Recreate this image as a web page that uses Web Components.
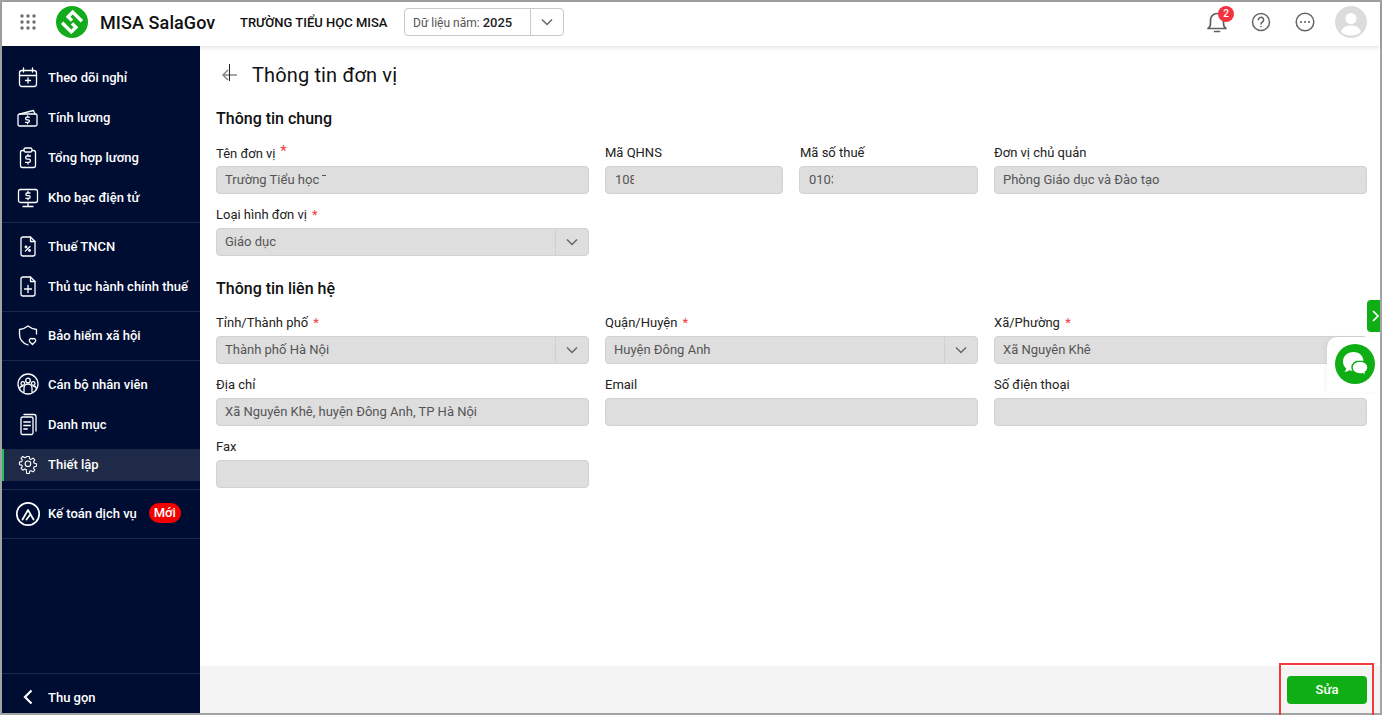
<!DOCTYPE html>
<html lang="vi">
<head>
<meta charset="utf-8">
<title>MISA SalaGov</title>
<style>
  html, body { margin: 0; height: 100%; }
  body { font-family: Roboto, "Liberation Sans", sans-serif; overflow: hidden; }
</style>
</head>
<body>
<app-shell>
  <app-header slot="header"></app-header>
  <side-nav slot="nav">
    <nav-group first>
      <nav-item icon="calendar">Theo dõi nghỉ</nav-item>
      <nav-item icon="wallet">Tính lương</nav-item>
      <nav-item icon="clipboard">Tổng hợp lương</nav-item>
      <nav-item icon="monitor">Kho bạc điện tử</nav-item>
    </nav-group>
    <nav-group>
      <nav-item icon="percent">Thuế TNCN</nav-item>
      <nav-item icon="fileplus">Thủ tục hành chính thuế</nav-item>
    </nav-group>
    <nav-group>
      <nav-item icon="shield">Bảo hiểm xã hội</nav-item>
    </nav-group>
    <nav-group>
      <nav-item icon="people">Cán bộ nhân viên</nav-item>
      <nav-item icon="docs">Danh mục</nav-item>
      <nav-item icon="gear" active>Thiết lập</nav-item>
    </nav-group>
    <nav-group>
      <nav-item icon="account" badge="Mới">Kế toán dịch vụ</nav-item>
    </nav-group>
  </side-nav>
  <unit-page slot="main">
    <form-section title="Thông tin chung">
      <form-field label="Tên đơn vị" required raised span="2" value="Trường Tiểu học" tick></form-field>
      <form-field label="Mã QHNS" value="108" clip="19" inset></form-field>
      <form-field label="Mã số thuế" value="0103" clip="24" inset labelinset></form-field>
      <form-field label="Đơn vị chủ quản" span="2" value="Phòng Giáo dục và Đào tạo"></form-field>
      <form-field label="Loại hình đơn vị" required span="2" value="Giáo dục" select></form-field>
    </form-section>
    <form-section title="Thông tin liên hệ">
      <form-field label="Tỉnh/Thành phố" required span="2" value="Thành phố Hà Nội" select></form-field>
      <form-field label="Quận/Huyện" required span="2" value="Huyện Đông Anh" select></form-field>
      <form-field label="Xã/Phường" required span="2" value="Xã Nguyên Khê"></form-field>
      <form-field label="Địa chỉ" span="2" value="Xã Nguyên Khê, huyện Đông Anh, TP Hà Nội"></form-field>
      <form-field label="Email" span="2"></form-field>
      <form-field label="Số điện thoại" span="2"></form-field>
      <form-field label="Fax" span="2"></form-field>
    </form-section>
  </unit-page>
  <chat-dock slot="overlay"></chat-dock>
</app-shell>

<script>
const ICONS = {
  calendar: '<rect x="2.5" y="4.5" width="17" height="16" rx="2.5"/><path d="M2.5 9.5h17M6.5 2v4M15.5 2v4M11 12v5M8.5 14.5h5"/>',
  wallet: '<path d="M3 8l13.5-3.5 1.5 3.5"/><rect x="1" y="8" width="19" height="12" rx="1.5"/><path d="M12.4 11.2h-2.5a1.2 1.2 0 0 0 0 2.6h1.2a1.2 1.2 0 0 1 0 2.6H8.600M10.500 10v1.200M10.500 16.400v1.300"/>',
  clipboard: '<path d="M7 4.500H5.500a2 2 0 0 0-2 2v13a2 2 0 0 0 2 2h11a2 2 0 0 0 2-2v-13a2 2 0 0 0-2-2H15"/><rect x="7" y="2" width="8" height="4" rx="1.500"/><path d="M13.500 10h-3.300a1.600 1.600 0 0 0 0 3.200h1.600a1.600 1.600 0 0 1 0 3.200H8.500M11 8.500v1.500M11 16.400v1.600"/>',
  monitor: '<rect x="1.500" y="3.500" width="19" height="13" rx="2"/><path d="M11 16.500v3.500M6 20.500h10"/><path d="M13 7h-2.800a1.300 1.300 0 0 0 0 2.700h1.600a1.300 1.300 0 0 1 0 2.700H9M11 5.500V7M11 12.400v1.300"/>',
  percent: '<path d="M13.500 2H6a2 2 0 0 0-2 2v15a2 2 0 0 0 2 2h10a2 2 0 0 0 2-2V6.500z"/><path d="M13.500 2v4.500H18"/><path d="M8.500 16l4.500-4.500"/><circle cx="9" cy="12" r=".8"/><circle cx="12.500" cy="15.500" r=".8"/>',
  fileplus: '<path d="M13.500 2H6a2 2 0 0 0-2 2v15a2 2 0 0 0 2 2h10a2 2 0 0 0 2-2V6.500z"/><path d="M13.500 2v4.500H18M11 10.500v7M7.500 14h7"/>',
  shield: '<path d="M11 21C5 19 2.500 15 2.500 10V5.500C6 5 8.500 4 11 2c2.500 2 5 3 8.500 3.500V10"/><path d="M15.500 20.500l-3-3a2 2 0 0 1 3-2.500 2 2 0 0 1 3 2.500z"/>',
  people: '<circle cx="11" cy="11" r="10"/><circle cx="11" cy="7.500" r="2.300"/><circle cx="5.800" cy="10.500" r="1.800"/><circle cx="16.200" cy="10.500" r="1.800"/><path d="M7 19v-4a4 4 0 0 1 8 0v4M2.800 16v-1a3 3 0 0 1 3-2M19.200 16v-1a3 3 0 0 0-3-2"/>',
  docs: '<rect x="4" y="4" width="12" height="17.500" rx="1.500"/><path d="M7 1.500h10a2 2 0 0 1 2 2V18M6.800 9h6.500M6.800 12.500h6.500M6.800 16h3.500"/>',
  gear: '<g transform="translate(1.600 1.400) scale(.85)"><circle cx="11" cy="11" r="3.300"/><path d="M9.500 2h3l.5 2.600 1.800.8 2.200-1.500 2.100 2.100-1.500 2.200.8 1.800 2.600.5v3l-2.600.5-.8 1.800 1.500 2.200-2.100 2.100-2.200-1.500-1.800.8-.5 2.600h-3L9 17.400l-1.800-.8L5 18.100 2.900 16l1.500-2.200-.8-1.800L1 11.500v-3l2.600-.5.8-1.800L2.900 4 5 1.900l2.200 1.500L9 2.600z" transform="translate(0 .5)"/></g>',
  account: '<circle cx="11" cy="12" r="11.200" stroke-width="1.700"/><path d="M5.500 17.500L11 8l5.500 9.500M9.500 17.500l3-4" stroke-width="1.700"/>'
};

class AppShell extends HTMLElement {
  constructor() {
    super();
    this.attachShadow({ mode: "open" });
    this.shadowRoot.innerHTML = `
      <style>
        :host {
          display: block;
          position: relative;
          box-sizing: border-box;
          width: 1382px;
          height: 715px;
          border: 2px solid #a3a3a3;
          background: #fff;
        }
        .wrap { display: flex; flex-direction: column; height: 100%; }
        .body { flex: 1; display: flex; min-height: 0; }
      </style>
      <div class="wrap">
        <slot name="header"></slot>
        <div class="body">
          <slot name="nav"></slot>
          <slot name="main"></slot>
        </div>
      </div>
      <slot name="overlay"></slot>
    `;
  }
}

class AppHeader extends HTMLElement {
  constructor() {
    super();
    this.attachShadow({ mode: "open" });
    this.shadowRoot.innerHTML = `
      <style>
        :host {
          display: flex;
          align-items: center;
          flex: none;
          box-sizing: border-box;
          height: 44px;
          padding: 0 13px 4px 18px;
          position: relative;
          z-index: 2;
          background: #fff;
          box-shadow: 0 1px 5px rgba(0, 0, 0, .14);
          color: #111;
        }
        svg { display: block; flex: none; }
        .apps { margin-right: 20px; }
        .logo { margin-right: 12px; }
        .brand { font-size: 18px; font-weight: 500; letter-spacing: .09px; width: 140px; }
        .school { font-size: 13px; font-weight: 500; width: 164px; white-space: nowrap; }
        .year {
          box-sizing: border-box;
          display: flex;
          align-items: center;
          width: 160px;
          height: 28px;
          border: 1px solid #c9c9c9;
          border-radius: 4px;
          font-size: 12px;
        }
        .year .val { flex: 1; padding-left: 8px; color: #555; white-space: nowrap; }
        .year b { font-size: 13px; font-weight: 500; color: #222; }
        .year .arrow { width: 32px; height: 100%; border-left: 1px solid #c9c9c9; display: flex; align-items: center; justify-content: center; }
        .tools { margin-left: auto; display: flex; align-items: center; }
        .bell { position: relative; width: 24px; height: 24px; margin-right: 22px; }
        .badge {
          position: absolute;
          left: 13px;
          top: -4px;
          width: 16px;
          height: 16px;
          border-radius: 50%;
          background: #f5333f;
          color: #fff;
          font-size: 10px;
          font-weight: 500;
          line-height: 16px;
          text-align: center;
        }
        .help { margin-right: 24px; }
        .more { margin-right: 20px; }
      </style>
      <svg class="apps" width="16" height="16" viewBox="0 0 16 16" fill="#6f6f6f">
        <circle cx="2" cy="2" r="1.700"/><circle cx="8" cy="2" r="1.700"/><circle cx="14" cy="2" r="1.700"/>
        <circle cx="2" cy="8" r="1.700"/><circle cx="8" cy="8" r="1.700"/><circle cx="14" cy="8" r="1.700"/>
        <circle cx="2" cy="14" r="1.700"/><circle cx="8" cy="14" r="1.700"/><circle cx="14" cy="14" r="1.700"/>
      </svg>
      <svg class="logo" width="32" height="32" viewBox="0 0 32 32">
        <circle cx="16" cy="16" r="16" fill="#13ab1b"/>
        <g transform="rotate(45 16 16)" fill="none" stroke="#fff" stroke-width="3.400">
          <path d="M22.500 8.500H9.500V15H15"/>
          <path d="M9.500 23.500H22.500V17H17"/>
        </g>
      </svg>
      <span class="brand">MISA SalaGov</span>
      <span class="school">TRƯỜNG TIỂU HỌC MISA</span>
      <div class="year">
        <span class="val">Dữ liệu năm: <b>2025</b></span>
        <span class="arrow">
          <svg width="12" height="8" viewBox="0 0 12 8" fill="none" stroke="#666" stroke-width="1.500"><path d="M1 1.500l5 5 5-5"/></svg>
        </span>
      </div>
      <div class="tools">
        <div class="bell">
          <svg width="24" height="24" viewBox="0 0 24 24" fill="none" stroke="#5f5f5f" stroke-width="1.700" stroke-linejoin="round" stroke-linecap="round">
            <path d="M3 18.500c1.500-1 2.500-2 2.500-5V10a6.500 6.500 0 0 1 13 0v3.500c0 3 1 4 2.500 5z"/><path d="M9.500 21.500h5"/>
          </svg>
          <span class="badge">2</span>
        </div>
        <svg class="help" width="20" height="20" viewBox="0 0 20 20" fill="none" stroke="#666" stroke-width="1.500" stroke-linecap="round">
          <circle cx="10" cy="10" r="8.500"/>
          <path d="M7.400 7.800a2.600 2.600 0 1 1 4 2.200c-.9.600-1.400 1-1.400 2"/><path d="M10 14.600v.1"/>
        </svg>
        <svg class="more" width="20" height="20" viewBox="0 0 20 20" fill="none" stroke="#666" stroke-width="1.500">
          <circle cx="10" cy="10" r="8.800"/>
          <g fill="#666" stroke="none"><circle cx="6" cy="10" r="1.100"/><circle cx="10" cy="10" r="1.100"/><circle cx="14" cy="10" r="1.100"/></g>
        </svg>
        <svg width="32" height="32" viewBox="0 0 32 32">
          <circle cx="16" cy="16" r="16" fill="#dcdcdc"/>
          <circle cx="16" cy="12.500" r="5.500" fill="#fff"/>
          <path d="M6 26c1.500-4.500 5-6.500 10-6.500S24.500 21.500 26 26a16 16 0 0 1-20 0z" fill="#fff"/>
        </svg>
      </div>
    `;
  }
}

class SideNav extends HTMLElement {
  constructor() {
    super();
    this.attachShadow({ mode: "open" });
    this.shadowRoot.innerHTML = `
      <style>
        :host {
          display: flex;
          flex-direction: column;
          flex: none;
          width: 198px;
          background: #000d33;
          color: #fff;
        }
        .foot {
          margin-top: auto;
          height: 40px;
          border-top: 1px solid #1c2848;
          display: flex;
          align-items: center;
          padding: 7px 0 0 21px;
          box-sizing: border-box;
          font-size: 13px;
          font-weight: 500;
        }
        svg { margin-right: 15px; }
      </style>
      <slot></slot>
      <div class="foot">
        <svg width="10" height="16" viewBox="0 0 10 16" fill="none" stroke="#fff" stroke-width="2.200"><path d="M8.500 1.500L2 8l6.500 6.500"/></svg>
        Thu gọn
      </div>
    `;
  }
}

class NavGroup extends HTMLElement {
  constructor() {
    super();
    this.attachShadow({ mode: "open" });
    this.shadowRoot.innerHTML = `
      <style>
        :host {
          display: flex;
          flex-direction: column;
          gap: 8px;
          padding: 7px 0 9px;
          border-bottom: 1px solid #1c2848;
        }
        :host([first]) { padding-top: 15px; }
      </style>
      <slot></slot>
    `;
  }
}

class NavItem extends HTMLElement {
  constructor() {
    super();
    this.attachShadow({ mode: "open" });
    const icon = ICONS[this.getAttribute("icon")] || "";
    const badge = this.getAttribute("badge");
    this.shadowRoot.innerHTML = `
      <style>
        :host {
          display: flex;
          align-items: center;
          height: 32px;
          padding-left: 15px;
          font-size: 13px;
          font-weight: 500;
          white-space: nowrap;
          box-sizing: border-box;
        }
        :host([active]) {
          margin: 1px 0 -1px;
          padding-bottom: 2px;
          background: #1e2a47;
          box-shadow: inset 2px 0 0 #1fc25d;
        }
        svg { flex: none; margin-right: 9px; overflow: visible; }
        .badge {
          margin-left: 12px;
          width: 32px;
          height: 20px;
          border-radius: 10px;
          background: #f50000;
          text-align: center;
          line-height: 20px;
        }
      </style>
      <svg width="22" height="22" viewBox="0 0 22 22" fill="none" stroke="#fff" stroke-width="1.300" stroke-linecap="round" stroke-linejoin="round">${icon}</svg>
      <slot></slot>
      ${badge ? `<span class="badge">${badge}</span>` : ""}
    `;
  }
}

class UnitPage extends HTMLElement {
  constructor() {
    super();
    this.attachShadow({ mode: "open" });
    this.shadowRoot.innerHTML = `
      <style>
        :host {
          flex: 1;
          min-width: 0;
          display: flex;
          flex-direction: column;
          color: #111;
        }
        .scroll { flex: 1; padding: 0 13px 0 16px; }
        .title {
          display: flex;
          align-items: center;
          height: 58px;
          font-size: 20px;
          letter-spacing: .14px;
          box-sizing: border-box;
        }
        .back { position: relative; width: 36px; height: 24px; }
        .back svg { position: absolute; left: 5px; top: 0; }
        .foot {
          flex: none;
          height: 47px;
          box-sizing: border-box;
          background: #f4f4f4;
          display: flex;
          justify-content: flex-end;
          align-items: center;
          padding-right: 13px;
          position: relative;
        }
        button {
          width: 80px;
          height: 28px;
          margin-top: 1px;
          padding: 0 0 2px;
          border: 0;
          border-radius: 4px;
          background: #0fae14;
          color: #fff;
          font: 500 13px Roboto, "Liberation Sans", sans-serif;
        }
        .mark {
          position: absolute;
          right: 6px;
          top: -3px;
          box-sizing: border-box;
          width: 95px;
          height: 52px;
          border: 2px solid #f23c3c;
          border-bottom: 0;
          pointer-events: none;
        }
      </style>
      <div class="scroll">
        <div class="title">
          <span class="back">
            <svg width="18" height="24" viewBox="0 0 18 24" fill="none">
              <path d="M16 12H2M7 7l-5 5 5 5" stroke="#8a8a8a" stroke-width="1.500"/>
              <path d="M8.500 1v17" stroke="#222" stroke-width="1"/>
            </svg>
          </span>
          Thông tin đơn vị
        </div>
        <slot></slot>
      </div>
      <div class="foot">
        <button>Sửa</button>
        <span class="mark"></span>
      </div>
    `;
  }
}

class FormSection extends HTMLElement {
  constructor() {
    super();
    this.attachShadow({ mode: "open" });
    this.shadowRoot.innerHTML = `
      <style>
        :host { display: block; margin-bottom: 19px; }
        h2 { margin: 1px 0 11px; font-size: 16px; font-weight: 500; line-height: 28px; }
        .grid {
          display: grid;
          grid-template-columns: 178.500px 178.500px 178px 179px 178.500px 178.500px;
          column-gap: 16px;
          row-gap: 12px;
        }
      </style>
      <h2>${this.getAttribute("title")}</h2>
      <div class="grid"><slot></slot></div>
    `;
  }
}

class FormField extends HTMLElement {
  constructor() {
    super();
    this.attachShadow({ mode: "open" });
    const required = this.hasAttribute("required");
    const select = this.hasAttribute("select");
    const value = this.getAttribute("value") || "";
    const clip = this.getAttribute("clip");
    const span = this.getAttribute("span") || 1;
    this.style.gridColumn = `span ${span}`;
    const reqClass = this.hasAttribute("raised") ? "req up" : "req";
    const inset = this.hasAttribute("inset") ? 1 : 0;
    const labelInset = this.hasAttribute("labelinset") ? 1 : 0;
    this.shadowRoot.innerHTML = `
      <style>
        :host { display: block; min-width: 0; }
        .label { height: 22px; line-height: 18px; font-size: 13px; color: #222; white-space: nowrap; padding-left: ${labelInset}px; box-sizing: border-box; }
        .req { color: #f23c3c; margin-left: 2px; }
        .req.up { font-size: 15px; vertical-align: 2px; line-height: 1; margin-left: 1px; }
        .box {
          box-sizing: border-box;
          display: flex;
          align-items: center;
          height: 28px;
          background: #dedede;
          border: 1px solid #d2d2d2;
          border-radius: 4px;
          font-size: 13px;
          color: #555;
        }
        .val { flex: 1; padding: 0 0 2px ${8 + inset}px; white-space: nowrap; min-width: 0; }
        .clip { display: inline-block; overflow: hidden; vertical-align: bottom; }
        .tick { display: inline-block; width: 4px; height: 1px; background: #555; vertical-align: 8px; margin-left: 3px; }
        .arrow { flex: none; width: 32px; height: 100%; border-left: 1px solid #cfcfcf; display: flex; align-items: center; justify-content: center; }
      </style>
      <div class="label">${this.getAttribute("label")}${required ? `<span class="${reqClass}"> *</span>` : ""}</div>
      <div class="box">
        <span class="val">${clip ? `<span class="clip" style="width:${clip}px">${value}</span>` : value}${this.hasAttribute("tick") ? '<span class="tick"></span>' : ""}</span>
        ${select ? '<span class="arrow"><svg width="12" height="8" viewBox="0 0 12 8" fill="none" stroke="#666" stroke-width="1.500"><path d="M1 1.500l5 5 5-5"/></svg></span>' : ""}
      </div>
    `;
  }
}

class ChatDock extends HTMLElement {
  constructor() {
    super();
    this.attachShadow({ mode: "open" });
    this.shadowRoot.innerHTML = `
      <style>
        :host { position: absolute; right: 0; top: 298px; width: 53px; height: 92px; }
        .tab {
          position: absolute;
          right: 0;
          top: 0;
          box-sizing: border-box;
          width: 13px;
          height: 32px;
          padding-left: 3px;
          background: #0fae14;
          border-radius: 4px 0 0 4px;
          display: flex;
          align-items: center;
          justify-content: center;
        }
        .panel {
          position: absolute;
          left: 0;
          right: 0;
          top: 37px;
          height: 55px;
          background: #fff;
          border-top-left-radius: 10px;
          box-shadow: -2px 0 4px rgba(0,0,0,.04);
        }
        .chat { position: absolute; left: 8px; top: 44px; display: block; }
      </style>
      <div class="tab">
        <svg width="7" height="12" viewBox="0 0 7 12" fill="none" stroke="#fff" stroke-width="1.700"><path d="M1 1l5 5-5 5"/></svg>
      </div>
      <div class="panel"></div>
      <svg class="chat" width="40" height="40" viewBox="0 0 40 40">
        <circle cx="20" cy="20" r="20" fill="#0fae14"/>
        <path d="M18.500 8C12.500 8 8 12 8 17.500c0 2.900 1.200 5.300 3.200 7-.2 1.300-.9 2.500-1.900 3.300 2 .1 3.900-.6 5.200-1.500 1.200.4 2.500.6 4 .6 6 0 10-3.900 10-9.400S24.500 8 18.500 8z" fill="#fff"/>
        <path d="M25 17c-4.600 0-8 2.800-8 6.500s3.400 6.500 8 6.500c.9 0 1.700-.1 2.400-.3 1 .7 2.800 1.200 4.400 1.100-.8-.6-1.400-1.500-1.600-2.500 1.800-1.200 2.800-2.900 2.800-4.800 0-3.700-3.400-6.500-8-6.500z" fill="#fff" stroke="#0fae14" stroke-width="1.500"/>
      </svg>
    `;
  }
}

customElements.define("app-shell", AppShell);
customElements.define("app-header", AppHeader);
customElements.define("side-nav", SideNav);
customElements.define("nav-group", NavGroup);
customElements.define("nav-item", NavItem);
customElements.define("unit-page", UnitPage);
customElements.define("form-section", FormSection);
customElements.define("form-field", FormField);
customElements.define("chat-dock", ChatDock);
</script>
</body>
</html>
